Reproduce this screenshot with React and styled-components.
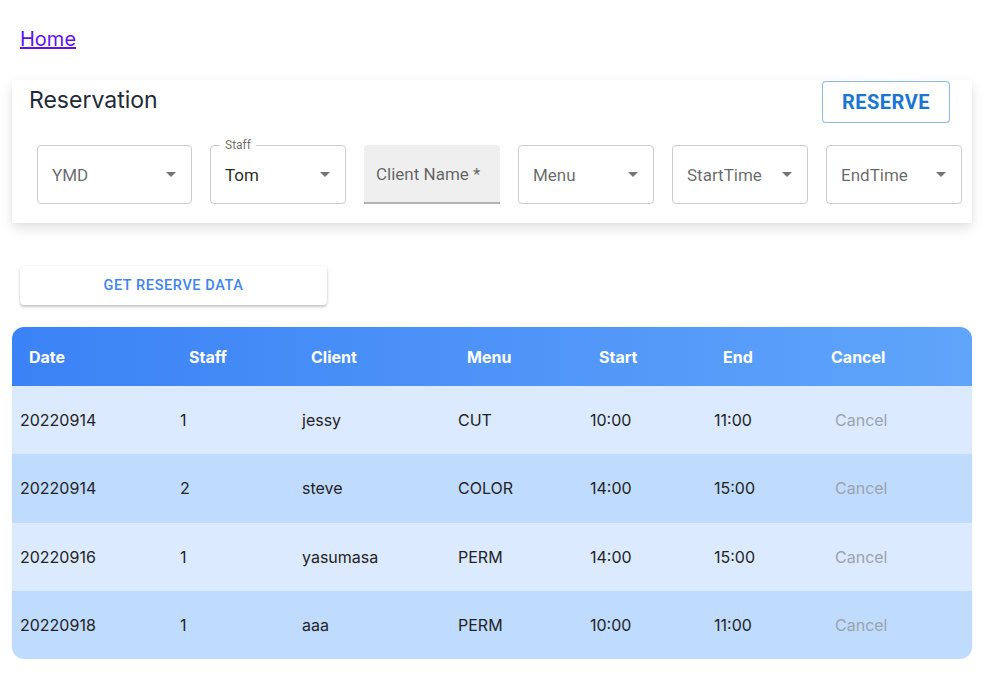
import React from 'react';
import styled, { createGlobalStyle } from 'styled-components';

const GlobalStyle = createGlobalStyle`
  body {
    margin: 0;
    background: #fff;
    font-family: Roboto, "Liberation Sans", sans-serif;
  }
`;

const Page = styled.div`
  padding: 0 28px 30px 12px;
`;

const HomeLink = styled.a`
  display: inline-block;
  margin: 27px 0 0 8px;
  font-family: Inter, "Liberation Sans", sans-serif;
  font-size: 20px;
  line-height: 24px;
  color: #5a12f5;
  text-decoration: underline;
`;

const Card = styled.section`
  margin-top: 29px;
  background: #fff;
  padding: 1px 10px 19px 17px;
  box-shadow: 0 6px 12px rgba(0, 0, 0, 0.1), 0 1px 4px rgba(0, 0, 0, 0.04);
`;

const CardHead = styled.div`
  display: flex;
  justify-content: space-between;
  align-items: flex-start;
  margin-right: 12px;
`;

const Title = styled.h2`
  margin: 4px 0 0;
  font-family: Inter, "Liberation Sans", sans-serif;
  font-size: 23px;
  font-weight: 400;
  line-height: 30px;
  color: #1f2937;
`;

const OutlineButton = styled.button`
  height: 42px;
  padding: 0 19px;
  background: #fff;
  border: 1px solid rgba(25, 118, 210, 0.5);
  border-radius: 4px;
  color: #1976d2;
  font-family: Roboto, "Liberation Sans", sans-serif;
  font-size: 20px;
  font-weight: 700;
  letter-spacing: 0.5px;
`;

const Fields = styled.div`
  display: flex;
  gap: 18px;
  margin: 22px 0 0 8px;
`;

const Field = styled.div`
  position: relative;
  flex: 0 0 auto;
  box-sizing: border-box;
  width: ${p => p.$w}px;
  height: 59px;
  display: flex;
  align-items: center;
  padding: 0 14px;
  border: 1px solid #cdcdcd;
  border-radius: 4px;
  font-size: 17px;
  color: ${p => (p.$filled ? 'rgba(0,0,0,0.87)' : 'rgba(0,0,0,0.6)')};
`;

const FilledField = styled.div`
  flex: 0 0 auto;
  box-sizing: border-box;
  width: 136px;
  height: 59px;
  display: flex;
  align-items: center;
  padding: 0 12px;
  background: #efefef;
  border-radius: 4px 4px 0 0;
  border-bottom: 2px solid #b3b3b3;
  font-size: 17px;
  color: rgba(0, 0, 0, 0.6);
`;

const Legend = styled.span`
  position: absolute;
  top: -8px;
  left: 9px;
  padding: 0 5px;
  background: #fff;
  font-size: 12px;
  line-height: 14px;
  color: rgba(0, 0, 0, 0.6);
`;

const Caret = styled.span`
  margin-left: auto;
  margin-right: 1px;
  width: 0;
  height: 0;
  border-left: 5px solid transparent;
  border-right: 5px solid transparent;
  border-top: 5px solid #757575;
`;

const DataButton = styled.button`
  display: block;
  width: 307px;
  height: 39px;
  margin: 43px 0 0 8px;
  padding-top: 1px;
  background: #fff;
  border: none;
  border-radius: 4px;
  box-shadow: 0 2px 3px rgba(0, 0, 0, 0.22), 0 0 2px rgba(0, 0, 0, 0.08);
  color: #3f84f0;
  font-family: Roboto, "Liberation Sans", sans-serif;
  font-size: 14.5px;
  font-weight: 500;
  letter-spacing: 0.6px;
`;

const Table = styled.div`
  margin-top: 22px;
  border-radius: 12px;
  overflow: hidden;
  font-family: Inter, "Liberation Sans", sans-serif;
`;

const cols = '160px 122px 156px 132px 124px 121px 1fr';

const HeadRow = styled.div`
  display: grid;
  grid-template-columns: ${cols};
  height: 59px;
  align-items: center;
  background: linear-gradient(90deg, #3b82f6, #60a5fa);
`;

const HeadCell = styled.div`
  padding-left: ${p => (p.$tight ? 4 : 17)}px;
  font-size: 16px;
  font-weight: 700;
  color: #fff;
`;

const Row = styled.div`
  display: grid;
  grid-template-columns: ${cols};
  height: 68.25px;
  align-items: center;
  background: ${p => (p.$alt ? '#bfdbfe' : '#dbeafe')};
`;

const Cell = styled.div`
  padding-left: 8px;
  font-size: 16px;
  color: #1f2328;
`;

const CancelLink = styled.span`
  padding-left: 8px;
  font-size: 16px;
  color: #9ca3af;
`;

const rows = [
  ['20220914', '1', 'jessy', 'CUT', '10:00', '11:00'],
  ['20220914', '2', 'steve', 'COLOR', '14:00', '15:00'],
  ['20220916', '1', 'yasumasa', 'PERM', '14:00', '15:00'],
  ['20220918', '1', 'aaa', 'PERM', '10:00', '11:00'],
];

export default function App() {
  return (
    <>
      <GlobalStyle />
      <Page>
        <HomeLink href="#">Home</HomeLink>

        <Card>
          <CardHead>
            <Title>Reservation</Title>
            <OutlineButton>RESERVE</OutlineButton>
          </CardHead>
          <Fields>
            <Field $w={155}>YMD<Caret /></Field>
            <Field $w={136} $filled>
              <Legend>Staff</Legend>
              Tom<Caret />
            </Field>
            <FilledField>Client Name *</FilledField>
            <Field $w={136}>Menu<Caret /></Field>
            <Field $w={136}>StartTime<Caret /></Field>
            <Field $w={136}>EndTime<Caret /></Field>
          </Fields>
        </Card>

        <DataButton>GET RESERVE DATA</DataButton>

        <Table>
          <HeadRow>
            <HeadCell>Date</HeadCell>
            <HeadCell>Staff</HeadCell>
            <HeadCell>Client</HeadCell>
            <HeadCell>Menu</HeadCell>
            <HeadCell>Start</HeadCell>
            <HeadCell>End</HeadCell>
            <HeadCell $tight>Cancel</HeadCell>
          </HeadRow>
          {rows.map((r, i) => (
            <Row key={i} $alt={i % 2 === 1}>
              {r.map((v, j) => <Cell key={j}>{v}</Cell>)}
              <CancelLink>Cancel</CancelLink>
            </Row>
          ))}
        </Table>
      </Page>
    </>
  );
}
